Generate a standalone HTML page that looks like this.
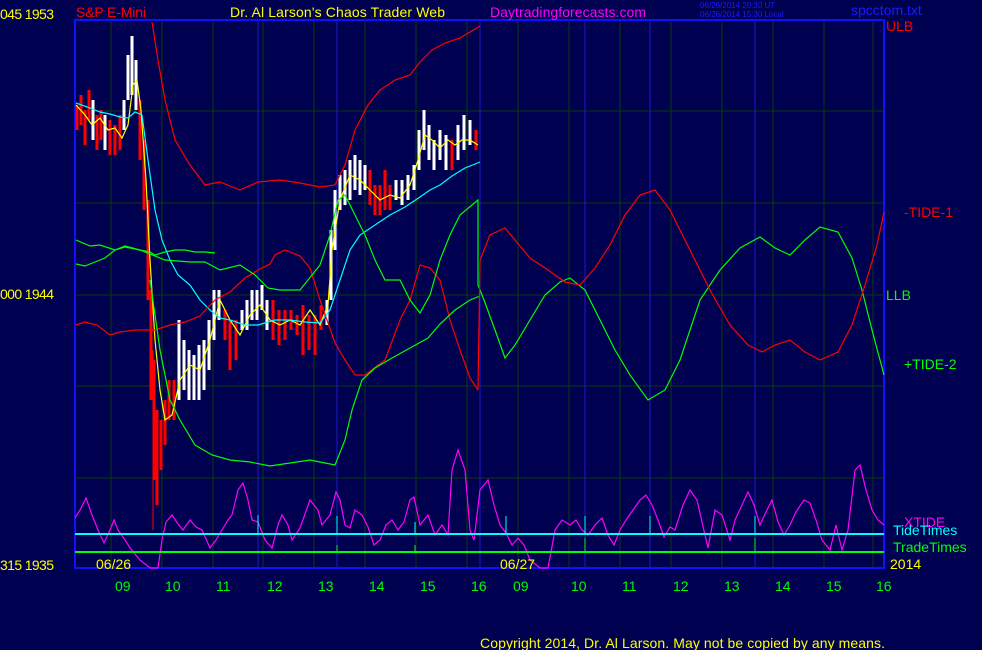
<!DOCTYPE html>
<html><head><meta charset="utf-8"><style>
html,body{margin:0;padding:0;background:#000050;}
svg{display:block;}
text{font-family:"Liberation Sans Narrow","Liberation Sans",sans-serif;font-size:14px;}
</style></head><body>
<svg width="982" height="650" viewBox="0 0 982 650" xmlns="http://www.w3.org/2000/svg">
<rect width="982" height="650" fill="#000050"/>
<g stroke="#0a3a0a" stroke-width="1">
<line x1="111" y1="21" x2="111" y2="567"/><line x1="162" y1="21" x2="162" y2="567"/><line x1="213" y1="21" x2="213" y2="567"/><line x1="263" y1="21" x2="263" y2="567"/><line x1="314" y1="21" x2="314" y2="567"/><line x1="365" y1="21" x2="365" y2="567"/><line x1="416" y1="21" x2="416" y2="567"/><line x1="467" y1="21" x2="467" y2="567"/>
<line x1="518" y1="21" x2="518" y2="567"/><line x1="569" y1="21" x2="569" y2="567"/><line x1="620" y1="21" x2="620" y2="567"/><line x1="671" y1="21" x2="671" y2="567"/><line x1="722" y1="21" x2="722" y2="567"/><line x1="773" y1="21" x2="773" y2="567"/><line x1="824" y1="21" x2="824" y2="567"/><line x1="873" y1="21" x2="873" y2="567"/>
<line x1="75" y1="111" x2="884" y2="111"/><line x1="75" y1="203" x2="884" y2="203"/><line x1="75" y1="295" x2="884" y2="295"/><line x1="75" y1="386" x2="884" y2="386"/><line x1="75" y1="478" x2="884" y2="478"/>
</g>
<g stroke="#1a1ad0" stroke-width="1">
<line x1="258" y1="21" x2="258" y2="567"/><line x1="337" y1="21" x2="337" y2="567"/><line x1="480" y1="21" x2="480" y2="567"/><line x1="585" y1="21" x2="585" y2="567"/><line x1="650" y1="21" x2="650" y2="567"/><line x1="755" y1="21" x2="755" y2="567"/>
</g>
<rect x="75" y="20" width="809" height="548" fill="none" stroke="#1010ff" stroke-width="2"/>
<g stroke-width="3">
<line x1="77" y1="105" x2="77" y2="130" stroke="#f00"/><line x1="81" y1="95" x2="81" y2="125" stroke="#f00"/><line x1="85" y1="110" x2="85" y2="145" stroke="#f00"/><line x1="89" y1="90" x2="89" y2="120" stroke="#f00"/><line x1="93" y1="100" x2="93" y2="140" stroke="#fff"/><line x1="97" y1="115" x2="97" y2="150" stroke="#f00"/><line x1="101" y1="110" x2="101" y2="140" stroke="#f00"/><line x1="105" y1="115" x2="105" y2="150" stroke="#fff"/><line x1="110" y1="120" x2="110" y2="155" stroke="#f00"/><line x1="115" y1="125" x2="115" y2="155" stroke="#f00"/><line x1="120" y1="115" x2="120" y2="150" stroke="#f00"/><line x1="124" y1="100" x2="124" y2="130" stroke="#fff"/><line x1="128" y1="55" x2="128" y2="100" stroke="#fff"/><line x1="132" y1="36" x2="132" y2="95" stroke="#fff"/><line x1="136" y1="60" x2="136" y2="110" stroke="#fff"/><line x1="140" y1="100" x2="140" y2="160" stroke="#f00"/><line x1="144" y1="140" x2="144" y2="210" stroke="#f00"/><line x1="148" y1="200" x2="148" y2="300" stroke="#f00"/><line x1="151" y1="290" x2="151" y2="400" stroke="#f00"/><line x1="153" y1="350" x2="153" y2="530" stroke="#f00" stroke-width="1"/><line x1="154" y1="360" x2="154" y2="480" stroke="#f00"/><line x1="157" y1="410" x2="157" y2="505" stroke="#f00"/><line x1="161" y1="420" x2="161" y2="470" stroke="#f00"/><line x1="165" y1="400" x2="165" y2="445" stroke="#f00"/><line x1="169" y1="380" x2="169" y2="420" stroke="#f00"/><line x1="174" y1="380" x2="174" y2="420" stroke="#f00"/><line x1="179" y1="320" x2="179" y2="400" stroke="#fff"/><line x1="184" y1="340" x2="184" y2="390" stroke="#fff"/><line x1="189" y1="350" x2="189" y2="400" stroke="#fff"/><line x1="194" y1="355" x2="194" y2="400" stroke="#fff"/><line x1="199" y1="345" x2="199" y2="400" stroke="#fff"/><line x1="204" y1="340" x2="204" y2="390" stroke="#fff"/><line x1="209" y1="320" x2="209" y2="370" stroke="#fff"/><line x1="214" y1="290" x2="214" y2="340" stroke="#fff"/><line x1="219" y1="290" x2="219" y2="320" stroke="#fff"/><line x1="225" y1="310" x2="225" y2="340" stroke="#f00"/><line x1="230" y1="320" x2="230" y2="370" stroke="#f00"/><line x1="236" y1="320" x2="236" y2="360" stroke="#f00"/><line x1="242" y1="310" x2="242" y2="330" stroke="#fff"/><line x1="247" y1="300" x2="247" y2="330" stroke="#fff"/><line x1="252" y1="290" x2="252" y2="320" stroke="#fff"/><line x1="257" y1="290" x2="257" y2="320" stroke="#fff"/><line x1="262" y1="285" x2="262" y2="310" stroke="#fff"/><line x1="267" y1="300" x2="267" y2="330" stroke="#fff"/><line x1="273" y1="300" x2="273" y2="340" stroke="#f00"/><line x1="279" y1="310" x2="279" y2="345" stroke="#f00"/><line x1="285" y1="310" x2="285" y2="340" stroke="#f00"/><line x1="291" y1="310" x2="291" y2="330" stroke="#f00"/><line x1="297" y1="315" x2="297" y2="335" stroke="#f00"/><line x1="303" y1="305" x2="303" y2="355" stroke="#f00"/><line x1="309" y1="315" x2="309" y2="350" stroke="#f00"/><line x1="315" y1="315" x2="315" y2="355" stroke="#f00"/><line x1="321" y1="305" x2="321" y2="330" stroke="#f00"/><line x1="327" y1="300" x2="327" y2="325" stroke="#fff"/><line x1="331" y1="230" x2="331" y2="300" stroke="#fff"/><line x1="335" y1="190" x2="335" y2="250" stroke="#fff"/><line x1="340" y1="175" x2="340" y2="210" stroke="#fff"/><line x1="345" y1="170" x2="345" y2="205" stroke="#fff"/><line x1="350" y1="160" x2="350" y2="200" stroke="#fff"/><line x1="355" y1="155" x2="355" y2="190" stroke="#fff"/><line x1="360" y1="160" x2="360" y2="195" stroke="#fff"/><line x1="365" y1="165" x2="365" y2="190" stroke="#fff"/><line x1="370" y1="170" x2="370" y2="205" stroke="#f00"/><line x1="375" y1="185" x2="375" y2="215" stroke="#f00"/><line x1="380" y1="185" x2="380" y2="215" stroke="#f00"/><line x1="385" y1="170" x2="385" y2="210" stroke="#f00"/><line x1="390" y1="185" x2="390" y2="210" stroke="#f00"/><line x1="396" y1="180" x2="396" y2="200" stroke="#fff"/><line x1="402" y1="180" x2="402" y2="205" stroke="#fff"/><line x1="408" y1="175" x2="408" y2="200" stroke="#fff"/><line x1="414" y1="165" x2="414" y2="190" stroke="#fff"/><line x1="419" y1="130" x2="419" y2="170" stroke="#fff"/><line x1="424" y1="110" x2="424" y2="150" stroke="#fff"/><line x1="429" y1="125" x2="429" y2="160" stroke="#fff"/><line x1="434" y1="140" x2="434" y2="170" stroke="#fff"/><line x1="440" y1="130" x2="440" y2="160" stroke="#fff"/><line x1="446" y1="135" x2="446" y2="170" stroke="#fff"/><line x1="452" y1="140" x2="452" y2="170" stroke="#f00"/><line x1="458" y1="125" x2="458" y2="160" stroke="#fff"/><line x1="464" y1="115" x2="464" y2="150" stroke="#fff"/><line x1="470" y1="120" x2="470" y2="145" stroke="#fff"/><line x1="476" y1="130" x2="476" y2="150" stroke="#f00"/>
</g>
<g fill="none" stroke-width="1.2">
<polyline stroke="#ff0" points="76,105 85,115 92,125 100,118 108,130 115,128 122,138 128,125 133,85 137,80 141,110 146,180 150,260 155,340 160,390 165,420 172,415 180,380 190,365 200,370 210,340 220,300 230,320 240,335 250,315 260,305 270,320 280,325 290,320 300,325 310,310 320,325 328,305 332,250 340,200 350,175 360,180 370,190 380,200 390,195 400,198 410,185 418,160 425,135 432,140 440,148 448,140 455,145 462,140 470,140 478,145"/>
<polyline stroke="#0ff" points="76,103 90,108 100,112 110,114 120,117 128,118 135,112 142,115 148,160 155,210 162,240 170,260 178,275 190,285 200,300 210,310 220,318 230,320 245,325 258,325 275,320 290,320 305,322 320,323 330,310 340,280 350,250 360,235 375,225 390,215 405,207 420,197 430,190 440,185 452,176 465,168 480,162"/>
<polyline stroke="#f00" points="152,22 158,60 165,100 175,140 190,165 205,185 220,182 240,190 258,182 280,180 300,183 320,187 335,185 345,165 355,130 368,105 380,90 395,80 410,75 420,62 432,50 445,43 460,38 470,32 480,26"/>
<polyline stroke="#f00" points="76,325 85,322 97,325 110,335 120,332 135,330 155,330 170,325 185,322 200,316 215,300 230,292 245,278 260,269 270,264 275,255 285,250 300,256 310,268 320,300 335,343 345,360 355,375 365,375 385,360 400,320 410,300 420,265 430,268 440,280 450,320 460,350 470,378 478,390"/>
<polyline stroke="#0f0" points="150,280 160,350 170,400 180,420 195,445 212,455 230,460 250,462 270,466 290,463 310,460 325,463 335,465 345,440 352,410 362,380 375,368 392,358 410,348 428,338 440,324 455,310 470,300 480,296"/>
<polyline stroke="#0f0" points="76,240 90,246 100,245 115,250 125,247 140,250 165,260 190,262 205,262 220,270 240,265 255,275 268,288 280,290 300,290 320,265 330,235 338,200 345,195 355,215 365,235 375,260 385,280 400,280 410,300 420,313 430,295 440,260 450,235 460,215 472,205 478,200 478,285 484,300 495,330 505,358 515,345 530,320 545,295 560,282 570,278 585,290 600,320 615,350 630,375 648,400 665,390 680,360 700,300 720,270 740,248 760,237 775,248 790,255 805,240 820,227 838,232 852,258 862,290 872,330 884,375"/>
<polyline stroke="#0f0" points="76,264 85,266 95,262 105,258 115,250 125,246 140,250 150,252 155,255 165,252 175,250 185,250 195,252 205,252 215,253"/>
<polyline stroke="#f00" points="478,390 480,260 490,235 505,228 515,240 530,258 548,270 565,282 580,285 595,268 610,245 625,215 640,195 655,190 670,210 690,250 710,290 730,325 748,345 762,352 775,345 790,340 805,352 820,360 838,352 852,325 865,285 877,245 884,212"/>
</g>
<polyline fill="none" stroke="#ff00ff" stroke-width="1.2" points="75,518 80,510 86,498 92,515 98,530 104,543 110,530 114,520 118,530 125,540 130,548 140,560 150,568 158,568 162,540 166,522 172,515 178,524 183,530 190,520 196,527 202,530 210,548 216,540 222,530 228,520 232,515 238,490 243,483 248,500 252,520 258,522 265,540 272,548 278,525 282,515 288,525 292,540 300,528 310,500 318,510 322,525 330,515 336,492 340,500 345,525 350,528 355,510 362,515 368,527 374,545 380,540 386,525 392,520 398,530 404,522 410,500 414,497 420,525 428,515 435,535 442,525 448,535 452,470 458,450 465,470 470,530 474,540 480,490 488,480 494,505 500,525 506,533 512,545 518,538 524,545 530,560 540,568 548,568 555,530 562,520 570,525 576,520 582,530 588,535 595,525 602,518 608,535 614,545 620,530 626,520 633,510 640,500 646,495 652,505 658,520 664,537 670,527 675,530 683,505 690,490 697,500 702,522 708,548 715,510 722,515 730,540 735,520 742,505 748,492 754,505 760,525 766,512 772,500 778,522 784,535 790,525 796,512 804,500 810,503 816,520 822,540 830,550 836,525 842,550 848,530 855,470 860,465 866,490 872,510 878,520 884,525"/>
<line x1="75" y1="534" x2="884" y2="534" stroke="#0ff" stroke-width="2"/>
<line x1="75" y1="552" x2="884" y2="552" stroke="#0f0" stroke-width="2"/>
<g stroke="#0ff" stroke-width="1"><line x1="258" y1="534" x2="258" y2="515"/><line x1="337" y1="534" x2="337" y2="516"/><line x1="415" y1="534" x2="415" y2="522"/><line x1="506" y1="534" x2="506" y2="516"/><line x1="585" y1="534" x2="585" y2="516"/><line x1="650" y1="534" x2="650" y2="516"/><line x1="755" y1="534" x2="755" y2="516"/></g>
<g stroke="#0f0" stroke-width="1"><line x1="337" y1="552" x2="337" y2="545"/><line x1="415" y1="552" x2="415" y2="545"/><line x1="585" y1="552" x2="585" y2="538"/><line x1="755" y1="552" x2="755" y2="538"/></g>
<g fill="#ff0">
<text x="0" y="19" textLength="54">045  1953</text>
<text x="0" y="299" textLength="54">000  1944</text>
<text x="0" y="570" textLength="54">315  1935</text>
<text x="230" y="17" textLength="215">Dr. Al Larson's Chaos Trader Web</text>
<text x="96" y="569">06/26</text>
<text x="500" y="569">06/27</text>
<text x="890" y="569">2014</text>
<text x="480" y="648" textLength="405">Copyright 2014, Dr. Al Larson. May not be copied by any means.</text>
</g>
<text x="76" y="17" fill="#f00" textLength="70">S&amp;P E-Mini</text>
<text x="490" y="17" fill="#ff00ff" textLength="156">Daytradingforecasts.com</text>
<text x="700" y="8" fill="#1a1aff" style="font-size:8px">06/26/2014 20:30 UT</text>
<text x="700" y="17" fill="#1a1aff" style="font-size:8px">06/26/2014 15:30 Local</text>
<text x="851" y="15" fill="#1a1aff">spcctom.txt</text>
<text x="886" y="31" fill="#f00">ULB</text>
<text x="904" y="217" fill="#f00">-TIDE-1</text>
<text x="886" y="300" fill="#0f0">LLB</text>
<text x="904" y="369" fill="#0f0">+TIDE-2</text>
<text x="904" y="527" fill="#ff00ff">XTIDE</text>
<text x="893" y="535" fill="#0ff">TideTimes</text>
<text x="893" y="552" fill="#0f0">TradeTimes</text>
<g fill="#0f0">
<text x="115" y="591">09</text><text x="165" y="591">10</text><text x="216" y="591">11</text><text x="267" y="591">12</text><text x="318" y="591">13</text><text x="369" y="591">14</text><text x="420" y="591">15</text><text x="471" y="591">16</text>
<text x="513" y="591">09</text><text x="571" y="591">10</text><text x="622" y="591">11</text><text x="673" y="591">12</text><text x="724" y="591">13</text><text x="775" y="591">14</text><text x="826" y="591">15</text><text x="876" y="591">16</text>
</g>
</svg>
</body></html>
